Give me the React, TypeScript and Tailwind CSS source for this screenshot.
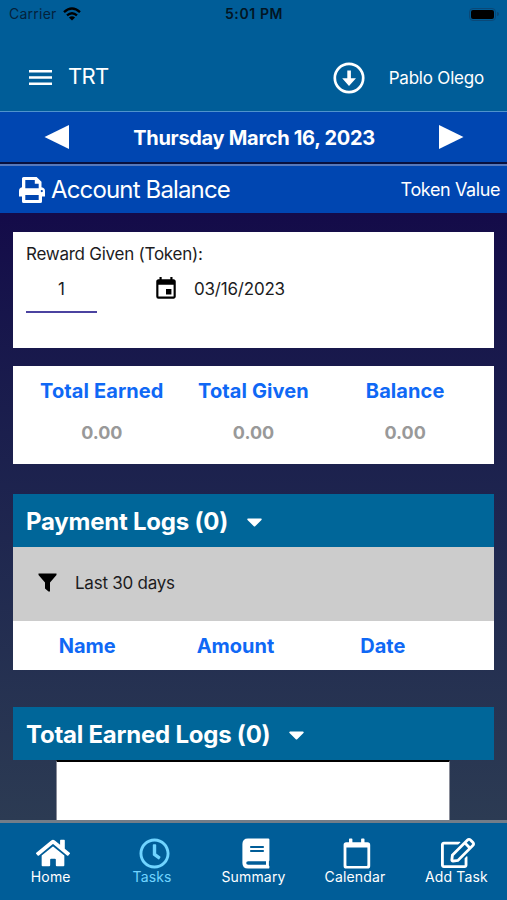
import React from 'react';
import { FaCaretDown, FaHome, FaRegClock, FaRegEdit } from 'react-icons/fa';
import { MdEvent } from 'react-icons/md';

interface Total {
  label: string;
  value: string;
}

interface Tab {
  label: string;
  icon: React.ReactNode;
  active?: boolean;
}

const totals: Total[] = [
  { label: 'Total Earned', value: '0.00' },
  { label: 'Total Given', value: '0.00' },
  { label: 'Balance', value: '0.00' },
];

const PrinterIcon: React.FC = () => (
  <svg width="26" height="26" viewBox="0 0 26 26" fill="currentColor">
    <path
      fillRule="evenodd"
      d="M3 1.6Q3 0 4.6 0H17.6L22.5 4.8V10.2Q26 10.6 26 14V19.5H23V24.4Q23 26 21.4 26H4.6Q3 26 3 24.4V19.5H0V14Q0 10.6 3 10.2ZM6.3 3V11.3H19.7V6.8H15.8V3ZM6.3 18V23H19.7V18ZM22.8 13A1.1 1.1 0 1 0 22.8 15.2A1.1 1.1 0 1 0 22.8 13Z"
    />
  </svg>
);

const FunnelIcon: React.FC = () => (
  <svg width="19" height="19" viewBox="0 0 19 19" fill="currentColor">
    <path d="M.5 .5H18.5V2L12 9.5V18.5H10.5L7 15.5V9.5L.5 2Z" />
  </svg>
);

const BookIcon: React.FC = () => (
  <svg width="28" height="31" viewBox="0 0 28 31" fill="currentColor">
    <path
      fillRule="evenodd"
      d="M6 .4H26.2Q27.4 .4 27.4 1.6V22.2Q27.4 22.8 26.9 23.2V27.4Q27.4 27.8 27.4 28.4V29.4Q27.4 30.6 26.2 30.6H6Q.4 30.6 .4 25V6Q.4 .4 6 .4ZM8.2 8.1V10H21.8V8.1ZM8.2 12V13.9H21.8V12ZM6.2 23.2Q4.2 23.2 4.2 25T6.2 26.8H24V23.2Z"
    />
  </svg>
);

const CalendarIcon: React.FC = () => (
  <svg width="28" height="31" viewBox="0 0 28 31" fill="currentColor">
    <path
      fillRule="evenodd"
      d="M6 1.2Q6 .4 6.8 .4H8.6Q9.4 .4 9.4 1.2V4.2H18.1V1.2Q18.1 .4 18.9 .4H20.7Q21.5 .4 21.5 1.2V4.2H24.5Q27.2 4.2 27.2 6.9V28Q27.2 30.6 24.5 30.6H3.2Q.6 30.6 .6 28V6.9Q.6 4.2 3.2 4.2H6ZM3.4 9.6V27.2Q3.4 27.9 4.1 27.9H23.7Q24.4 27.9 24.4 27.2V9.6Z"
    />
  </svg>
);

const tabs: Tab[] = [
  { label: 'Home', icon: <FaHome className="h-[34px] w-[34px]" /> },
  { label: 'Tasks', icon: <FaRegClock className="h-[31px] w-[31px]" />, active: true },
  { label: 'Summary', icon: <BookIcon /> },
  { label: 'Calendar', icon: <CalendarIcon /> },
  { label: 'Add Task', icon: <FaRegEdit className="h-[34px] w-[34px]" /> },
];

const StatusBar: React.FC = () => (
  <div className="grid h-7 grid-cols-3 items-center pr-2 pl-[9px] text-sm text-[#04223c]">
    <div className="flex items-center gap-[6px]">
      <span className="tracking-[0.25px]">Carrier</span>
      <svg width="18" height="14" viewBox="0 0 18 14" fill="none" stroke="#000" strokeWidth="2.4">
        <path d="M1 5.2Q9 -2 17 5.2" />
        <path d="M4 8.4Q9 4 14 8.4" />
        <path d="M9 13.6L5.9 10.6Q9 8 12.1 10.6Z" fill="#000" stroke="none" />
      </svg>
    </div>
    <span className="text-center font-semibold tracking-[0.6px] text-[#021524]">5:01 PM</span>
    <div className="flex items-center justify-end gap-px">
      <div className="h-[13px] w-[27px] rounded-[4px] border border-[#0a4877] p-px">
        <div className="h-full w-full rounded-[2px] bg-black" />
      </div>
      <div className="h-1 w-[2px] rounded-r bg-[#0a4877]" />
    </div>
  </div>
);

const Header: React.FC = () => (
  <header className="h-[111px] bg-[#005d98]">
    <StatusBar />
    <div className="flex h-[83px] items-center pt-[17px] pr-[23px] pl-[29px] text-white">
      <svg className="-mt-px" width="23" height="15" viewBox="0 0 23 15" fill="currentColor">
        <path d="M0 0H23V2.5H0ZM0 6.2H23V8.7H0ZM0 12.4H23V14.9H0Z" />
      </svg>
      <h1 className="-mt-[4px] ml-[16px] text-[22px] tracking-[-0.7px]">TRT</h1>
      <svg className="ml-auto" width="32" height="32" viewBox="0 0 32 32" fill="none">
        <circle cx="16" cy="16" r="14.2" stroke="currentColor" strokeWidth="2.7" />
        <path d="M14.3 8.5H17.9V16.3H23L16 24L9.2 16.3H14.3Z" fill="currentColor" />
      </svg>
      <span className="ml-[24px] pt-px text-[17px] tracking-[-0.2px]">Pablo Olego</span>
    </div>
  </header>
);

const SectionHeader: React.FC<{ title: string }> = ({ title }) => (
  <div className="flex h-[53px] items-center bg-[#006699] pl-[13px] text-white">
    <h2 className="pt-[2px] text-2xl font-bold tracking-[-0.23px]">{title}</h2>
    <FaCaretDown className="mt-[2px] ml-[14px] h-[25px] w-[25px]" />
  </div>
);

const App: React.FC = () => (
  <div className="flex h-[900px] w-[507px] flex-col overflow-hidden bg-[#005d98] font-['Inter',sans-serif]">
    <Header />

    {/* Day switcher */}
    <div className="flex h-[51px] items-center justify-between border-t border-[#4f93cd] bg-[#0046b1] pr-[43px] pl-11 text-white">
      <svg width="25" height="24" viewBox="0 0 25 24" fill="currentColor">
        <path d="M0.5 12L25 0V24Z" />
      </svg>
      <span className="pt-px text-xl font-bold tracking-[-0.3px]">Thursday March 16, 2023</span>
      <svg width="25" height="24" viewBox="0 0 25 24" fill="currentColor">
        <path d="M24.5 12L0 0V24Z" />
      </svg>
    </div>
    <div className="h-[2px] bg-[#07103f]" />
    <div className="flex h-[49px] items-center border-t-2 border-[#5579bd] bg-[#0046b1] pr-[7px] pl-[19px] text-white">
      <PrinterIcon />
      <h2 className="ml-[6px] text-2xl tracking-[-0.85px]">Account Balance</h2>
      <span className="ml-auto text-lg tracking-[-0.4px]">Token Value</span>
    </div>

    <main className="h-[607px] overflow-hidden bg-linear-to-b from-[#140b49] to-[#2c3b53] px-[13px] pt-[19px]">
      <section className="h-[116px] bg-white px-[13px] pt-[10px] text-[#1c1c1e]">
        <p className="text-[17px] leading-[25px] tracking-[-0.25px]">Reward Given (Token):</p>
        <div className="flex">
          <div className="h-[46px] w-[71px] border-b-2 border-[#4b43a0] text-center text-[17px] leading-[44px]">1</div>
          <MdEvent className="mt-[9px] ml-[56px] h-[26px] w-[26px] text-black" />
          <span className="ml-[15px] text-[17px] leading-[44px] tracking-[-0.2px]">03/16/2023</span>
        </div>
      </section>

      <section className="mt-[18px] grid h-[98px] grid-cols-3 bg-white px-[13px] pt-[11px] text-center font-bold">
        {totals.map((total) => (
          <div key={total.label}>
            <p className="text-xl leading-[28px] tracking-[0.1px] text-[#0f68f5]">{total.label}</p>
            <p className="mt-[14px] text-lg leading-[27px] text-[#999]">{total.value}</p>
          </div>
        ))}
      </section>

      <section className="mt-[30px] bg-white">
        <SectionHeader title="Payment Logs (0)" />
        <div className="flex h-[74px] items-center bg-[#ccc] pl-[25px]">
          <div className="-mt-[4px] text-black">
            <FunnelIcon />
          </div>
          <span className="ml-[18px] text-[17px] tracking-[-0.25px] text-[#1c1c1e]">Last 30 days</span>
        </div>
        <div className="grid h-[49px] grid-cols-3 items-center text-center text-xl font-bold text-[#0f68f5]">
          <span className="pr-3">Name</span>
          <span className="pr-9">Amount</span>
          <span className="pr-[62px]">Date</span>
        </div>
      </section>

      <section className="mt-[37px]">
        <SectionHeader title="Total Earned Logs (0)" />
        <div className="mr-[44px] ml-[43px] h-[70px] border-x border-t-2 border-x-[#8a8d99] border-t-black bg-white" />
      </section>
    </main>

    <nav className="flex h-[80px] border-t-[3px] border-[#737d89] pt-[13px] text-white">
      {tabs.map((tab) => (
        <div
          key={tab.label}
          className={tab.active ? 'flex flex-1 flex-col items-center text-[#70d4ff]' : 'flex flex-1 flex-col items-center'}
        >
          <div className="flex h-[34px] items-center pl-1">{tab.icon}</div>
          <span className="text-sm leading-[14px] tracking-[0.15px]">{tab.label}</span>
        </div>
      ))}
    </nav>
  </div>
);

export default App;
